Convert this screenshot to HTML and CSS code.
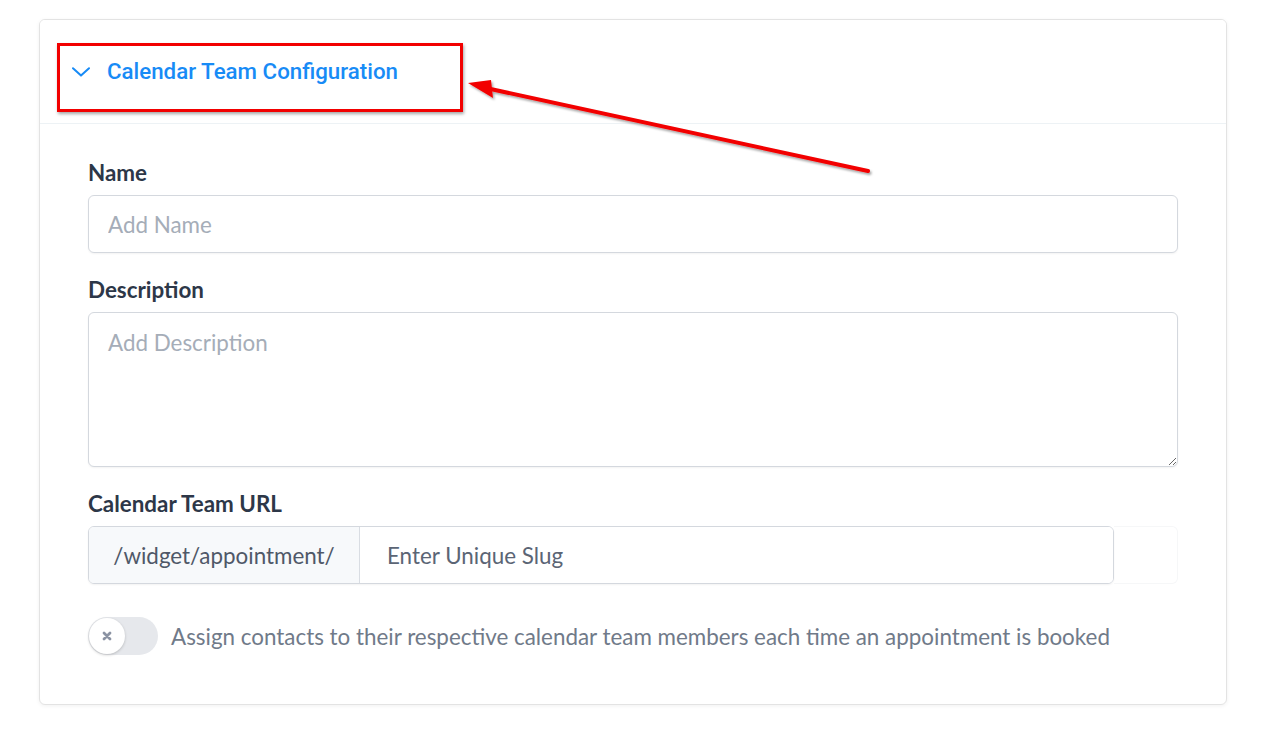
FILE: index.html
```html
<!DOCTYPE html>
<html lang="en">
<head>
<meta charset="utf-8">
<title>Calendar Team Configuration</title>
<link rel="stylesheet" href="styles.css">
</head>
<body>
<div class="page">
  <section class="card">
    <header class="card-header">
      <svg class="chevron" width="18" height="10" viewBox="0 0 18 10"><path d="M1 1.2 L9 8.6 L17 1.2" fill="none" stroke="#188bf6" stroke-width="2" stroke-linecap="round" stroke-linejoin="round"/></svg>
      <span class="card-title">Calendar Team Configuration</span>
    </header>
    <div class="card-body">
      <div class="field">
        <label class="label">Name</label>
        <input class="input" type="text" placeholder="Add Name">
      </div>
      <div class="field">
        <label class="label">Description</label>
        <textarea class="textarea" placeholder="Add Description"></textarea>
      </div>
      <div class="field">
        <label class="label">Calendar Team URL</label>
        <div class="url-row">
          <div class="url-group">
            <span class="url-prefix">/widget/appointment/</span>
            <input class="url-input" type="text" placeholder="Enter Unique Slug">
          </div>
          <div class="url-ghost"></div>
        </div>
      </div>
      <div class="toggle-row">
        <span class="toggle"><span class="knob"><svg width="12" height="12" viewBox="0 0 12 12"><path d="M3 3 L9 9 M9 3 L3 9" stroke="#8b93a3" stroke-width="2.8" stroke-linecap="round"/></svg></span></span>
        <span class="toggle-text">Assign contacts to their respective calendar team members each time an appointment is booked</span>
      </div>
    </div>
  </section>
</div>
<div class="highlight-box"></div>
<svg class="arrow" width="1280" height="734" viewBox="0 0 1280 734">
  <defs>
    <filter id="sh" x="-10%" y="-10%" width="120%" height="130%">
      <feDropShadow dx="1.5" dy="2" stdDeviation="1.2" flood-color="#000" flood-opacity="0.35"/>
    </filter>
  </defs>
  <g filter="url(#sh)">
    <line x1="868" y1="171" x2="486" y2="88" stroke="#f20000" stroke-width="4" stroke-linecap="round"/>
    <polygon points="468,83 491,80 493,98" fill="#f20000"/>
  </g>
</svg>
</body>
</html>
```

FILE: styles.css
```css
* { box-sizing: border-box; }
html, body { margin: 0; padding: 0; background: #ffffff; }
body {
  font-family: "Lato", "Noto Sans", sans-serif;
  width: 1280px;
  height: 734px;
  overflow: hidden;
  position: relative;
}
.page {
  padding: 19px 53px 0 39px;
}
.card {
  width: 1188px;
  height: 686px;
  border: 1px solid #e3e3e3;
  border-radius: 6px;
  background: #ffffff;
  box-shadow: 0 1px 4px rgba(0, 0, 0, 0.06);
  overflow: hidden;
}
.card-header {
  height: 104px;
  display: flex;
  align-items: center;
  gap: 17px;
  padding: 0 0 0 32px;
  border-bottom: 1px solid #edf2f5;
  background: #ffffff;
}
.chevron { display: block; margin-top: 1px; }
.card-title {
  font-family: "Roboto", "Liberation Sans", sans-serif;
  font-weight: 500;
  font-size: 22.3px;
  color: #188bf6;
  line-height: 26px;
  margin-top: -2px;
}
.card-body {
  padding: 35px 48px 0 48px;
  display: flex;
  flex-direction: column;
  gap: 23px;
}
.field {
  display: flex;
  flex-direction: column;
  gap: 9px;
}
.label {
  font-size: 22.4px;
  font-weight: 700;
  line-height: 27px;
  color: #2d3748;
}
.input, .textarea, .url-input {
  font-family: "Lato", "Noto Sans", sans-serif;
  font-size: 22.4px;
  color: #2d3748;
  outline: none;
}
.input {
  height: 58px;
  width: 100%;
  border: 1px solid #d4d8de;
  border-radius: 6px;
  padding: 0 19px;
  box-shadow: 0 1px 2px rgba(0, 0, 0, 0.05);
}
.textarea {
  height: 155px;
  width: 100%;
  border: 1px solid #d4d8de;
  border-radius: 6px;
  padding: 16px 19px;
  line-height: 27px;
  resize: vertical;
  box-shadow: 0 1px 2px rgba(0, 0, 0, 0.05);
  display: block;
}
.input::placeholder, .textarea::placeholder { color: #a5adb8; }
.url-row {
  display: flex;
  height: 58px;
}
.url-group {
  display: flex;
  width: 1026px;
  border: 1px solid #d4d8de;
  border-radius: 6px;
  overflow: hidden;
  box-shadow: 0 1px 2px rgba(0, 0, 0, 0.05);
}
.url-prefix {
  width: 271px;
  flex: none;
  background: #f7f9fb;
  border-right: 1px solid #d9dde3;
  display: flex;
  align-items: center;
  justify-content: center;
  font-size: 22.4px;
  color: #4f5868;
}
.url-input {
  flex: 1;
  border: none;
  padding: 0 27px;
  background: #fff;
}
.url-input::placeholder { color: #5b6575; }
.url-ghost {
  flex: 1;
  border: 1px solid #f6f7f8;
  border-left: none;
  border-radius: 0 6px 6px 0;
}
.toggle-row {
  margin-top: 10px;
  display: flex;
  align-items: center;
  gap: 13px;
}
.toggle {
  width: 70px;
  height: 38px;
  border-radius: 19px;
  background: #e6e8ec;
  display: flex;
  align-items: center;
  padding: 0 1px;
  flex: none;
}
.knob {
  width: 36px;
  height: 36px;
  border-radius: 50%;
  background: #ffffff;
  box-shadow: 0 1px 3px rgba(0, 0, 0, 0.2);
  display: flex;
  align-items: center;
  justify-content: center;
}
.knob svg { display: block; }
.toggle-text {
  font-size: 22.4px;
  color: #707a89;
  line-height: 27px;
}
.highlight-box {
  position: absolute;
  left: 57px;
  top: 43px;
  width: 406px;
  height: 69px;
  border: 3px solid #f20000;
  box-shadow: 1px 2px 3px rgba(0, 0, 0, 0.35);
}
.arrow {
  position: absolute;
  left: 0;
  top: 0;
  pointer-events: none;
}
```
